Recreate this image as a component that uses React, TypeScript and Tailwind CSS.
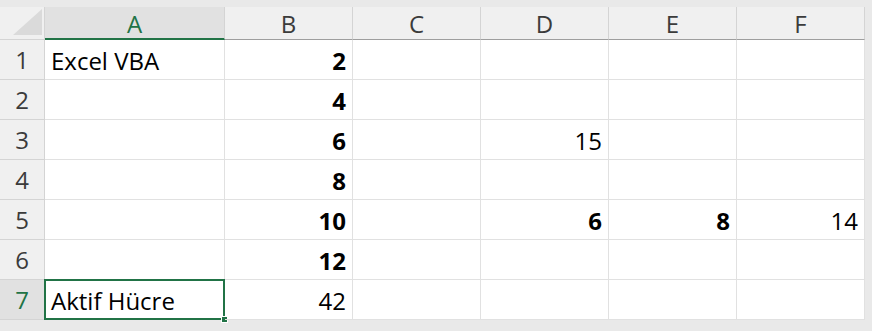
import React from 'react'

const cols = ['A', 'B', 'C', 'D', 'E', 'F']

type Cell = { v: string; bold?: boolean; left?: boolean }

// sheet contents, keyed by row then column letter
const data: Record<number, Partial<Record<string, Cell>>> = {
  1: { A: { v: 'Excel VBA', left: true }, B: { v: '2', bold: true } },
  2: { B: { v: '4', bold: true } },
  3: { B: { v: '6', bold: true }, D: { v: '15' } },
  4: { B: { v: '8', bold: true } },
  5: { B: { v: '10', bold: true }, D: { v: '6', bold: true }, E: { v: '8', bold: true }, F: { v: '14' } },
  6: { B: { v: '12', bold: true } },
  7: { A: { v: 'Aktif Hücre', left: true }, B: { v: '42' } },
}

const activeRow = 7
const activeCol = 'A'

function Corner() {
  return (
    <div className="flex items-end justify-end border-r border-b border-[#d4d4d4] bg-[#f0f0f0] pr-[2px] pb-[4px]">
      <svg width="29" height="26" viewBox="0 0 29 26">
        <polygon points="29,0 29,26 0,26" fill="#dadada" />
      </svg>
    </div>
  )
}

export default function App() {
  const rows = [1, 2, 3, 4, 5, 6, 7]
  return (
    <div
      className="w-[872px] h-[331px] bg-[#e9e9e9] pt-[7px] overflow-hidden"
      style={{ fontFamily: '"Open Sans", "Liberation Sans", sans-serif' }}
    >
      <div className="grid grid-cols-[45px_180px_128px_128px_128px_128px_128px] grid-rows-[33px_repeat(7,40px)] w-[865px] bg-white">
        <Corner />
        {cols.map((c) => (
          <div
            key={c}
            className={
              c === activeCol
                ? 'flex items-center justify-center pt-[2px] bg-[#e1e1e1] border-r border-[#d4d4d4] border-b-2 border-b-[#217346] text-[#217346] text-[24px]'
                : 'flex items-center justify-center pt-[2px] bg-[#f0f0f0] border-r border-[#d4d4d4] border-b border-b-[#9e9e9e] text-[#3b3b3b] text-[24px]'
            }
          >
            {c}
          </div>
        ))}
        {rows.map((r) => (
          <React.Fragment key={r}>
            <div
              className={
                r === activeRow
                  ? 'flex items-center justify-center bg-[#e1e1e1] border-r border-b border-[#d4d4d4] text-[#217346] text-[24px]'
                  : 'flex items-center justify-center bg-[#f0f0f0] border-r border-b border-[#d4d4d4] text-[#3b3b3b] text-[24px]'
              }
            >
              {r}
            </div>
            {cols.map((c) => {
              const cell = data[r][c]
              const active = r === activeRow && c === activeCol
              return (
                <div
                  key={c}
                  className={
                    'relative flex items-end pb-[6px] px-[6px] border-r border-b border-[#e1e1e1] text-[24px] text-black leading-none ' +
                    (cell?.left ? 'justify-start' : 'justify-end')
                  }
                >
                  {cell && (
                    <span className={cell.bold ? 'font-bold' : ''}>{cell.v}</span>
                  )}
                  {active && (
                    <>
                      <div className="absolute -left-[1px] -top-[1px] -right-[1px] -bottom-[1px] border-2 border-[#217346]" />
                      <div className="absolute -right-[4px] -bottom-[4px] w-[7px] h-[7px] bg-[#217346] border border-white" />
                    </>
                  )}
                </div>
              )
            })}
          </React.Fragment>
        ))}
      </div>
    </div>
  )
}
